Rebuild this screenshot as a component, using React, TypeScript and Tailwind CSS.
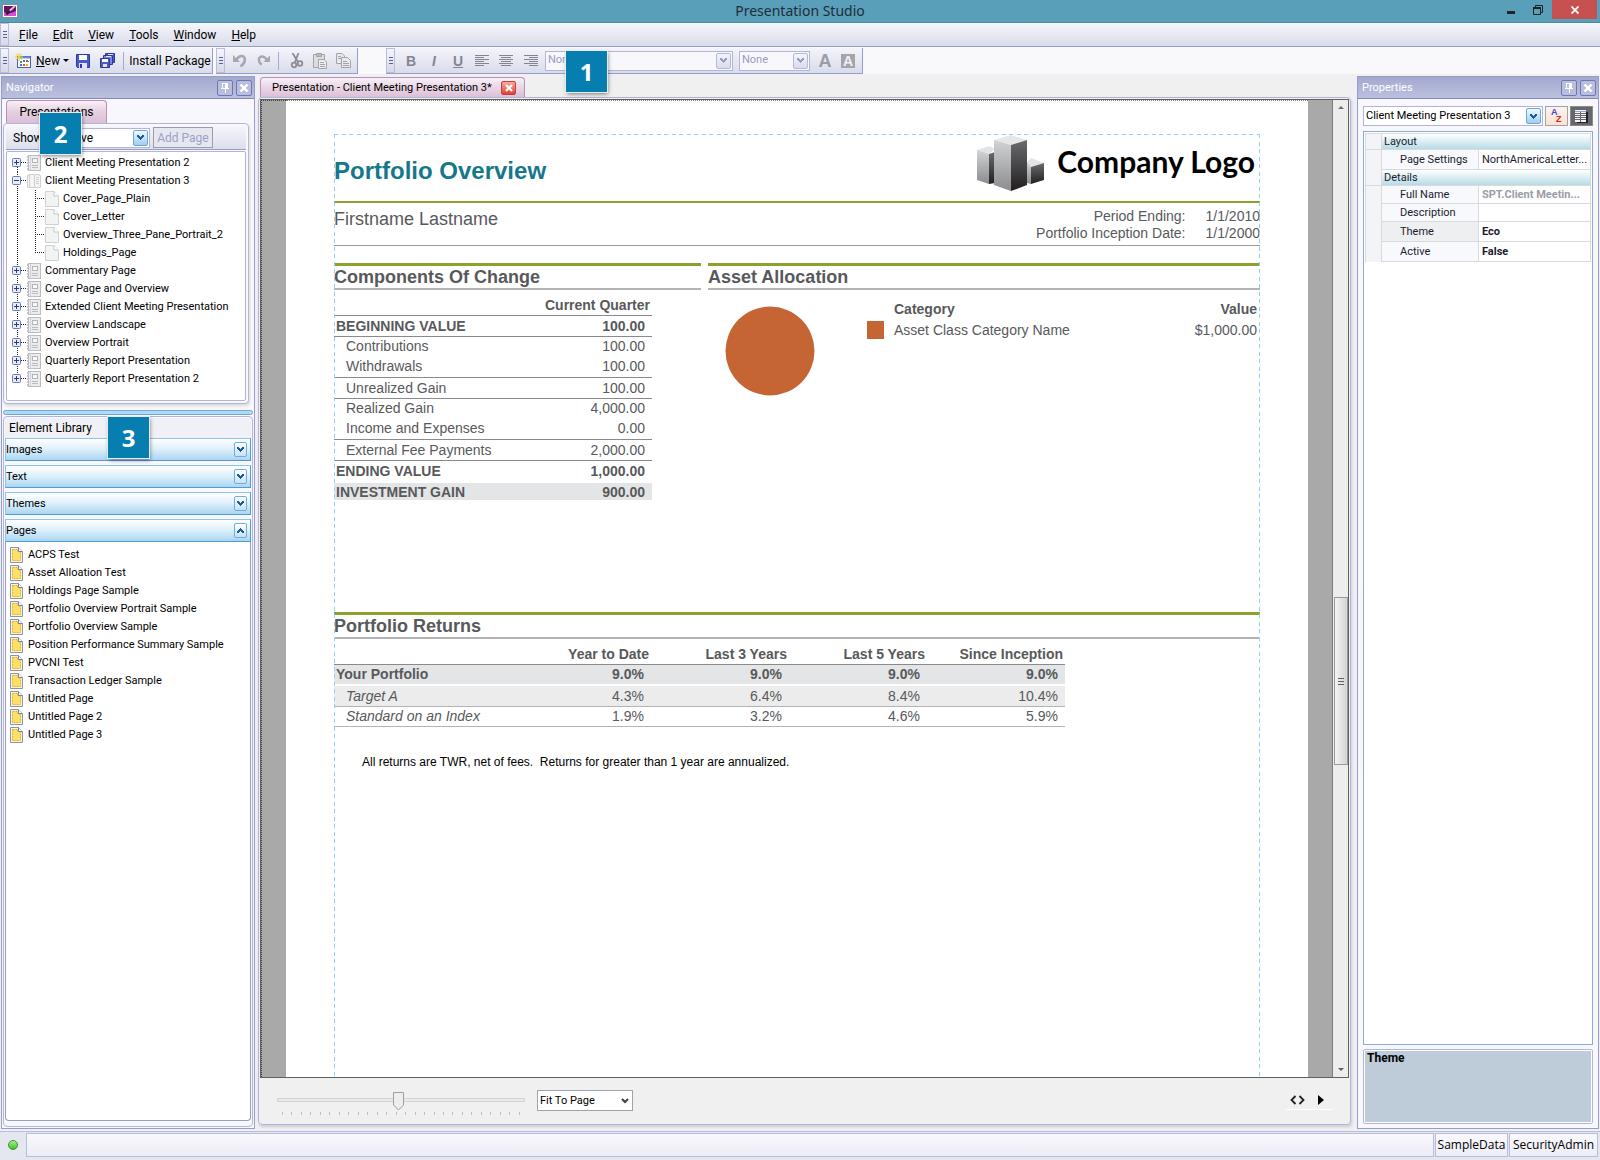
import React from 'react';

type TreeItem = { label: string; level: 0 | 1; open?: boolean; last?: boolean };

const MENUS = ['File', 'Edit', 'View', 'Tools', 'Window', 'Help'];

const TREE: TreeItem[] = [
  { label: 'Client Meeting Presentation 2', level: 0 },
  { label: 'Client Meeting Presentation 3', level: 0, open: true },
  { label: 'Cover_Page_Plain', level: 1 },
  { label: 'Cover_Letter', level: 1 },
  { label: 'Overview_Three_Pane_Portrait_2', level: 1 },
  { label: 'Holdings_Page', level: 1, last: true },
  { label: 'Commentary Page', level: 0 },
  { label: 'Cover Page and Overview', level: 0 },
  { label: 'Extended Client Meeting Presentation', level: 0 },
  { label: 'Overview Landscape', level: 0 },
  { label: 'Overview Portrait', level: 0 },
  { label: 'Quarterly Report Presentation', level: 0 },
  { label: 'Quarterly Report Presentation 2', level: 0, last: true },
];

const LIBRARY_PAGES = [
  'ACPS Test',
  'Asset Alloation Test',
  'Holdings Page Sample',
  'Portfolio Overview Portrait Sample',
  'Portfolio Overview Sample',
  'Position Performance Summary Sample',
  'PVCNI Test',
  'Transaction Ledger Sample',
  'Untitled Page',
  'Untitled Page 2',
  'Untitled Page 3',
];

const CHANGES = [
  { label: 'BEGINNING VALUE', value: '100.00', row: 'h-[21px] font-bold border-b border-[#8a8a8c]' },
  { label: 'Contributions', value: '100.00', row: 'h-5', indent: true },
  { label: 'Withdrawals', value: '100.00', row: 'h-[21px] border-b border-[#8a8a8c]', indent: true },
  { label: 'Unrealized Gain', value: '100.00', row: 'h-[21px] border-b border-[#8a8a8c]', indent: true },
  { label: 'Realized Gain', value: '4,000.00', row: 'h-5', indent: true },
  { label: 'Income and Expenses', value: '0.00', row: 'h-[21px] border-b border-[#8a8a8c]', indent: true },
  { label: 'External Fee Payments', value: '2,000.00', row: 'h-[21px] border-b border-[#8a8a8c]', indent: true },
  { label: 'ENDING VALUE', value: '1,000.00', row: 'h-[22px] font-bold border-b-2 border-white' },
  { label: 'INVESTMENT GAIN', value: '900.00', row: 'h-[18px] font-bold bg-[#e4e5e7]' },
];

const RETURNS = [
  { label: 'Your Portfolio', values: ['9.0%', '9.0%', '9.0%', '9.0%'], row: 'h-[21px] font-bold bg-[#e4e5e7] border-b-2 border-white', cell: 'pl-0.5' },
  { label: 'Target A', values: ['4.3%', '6.4%', '8.4%', '10.4%'], row: 'h-[21px] bg-[#ececec] border-b border-[#b4b4b6]', cell: 'pl-3 italic' },
  { label: 'Standard on an Index', values: ['1.9%', '3.2%', '4.6%', '5.9%'], row: 'h-5 border-b border-[#b4b4b6]', cell: 'pl-3 italic' },
];

const Chevron = ({ up = false, color = '#1c5a9c' }: { up?: boolean; color?: string }) => (
  <svg width="7" height="5" viewBox="0 0 7 5" shapeRendering="crispEdges" className={up ? 'rotate-180' : ''}>
    <path d="M0 0h2v1h1v1h1v-1h1v-1h2v2h-1v1h-1v1h-1v1h-1v-1h-1v-1h-1v-1h-1z" fill={color} />
  </svg>
);

const DropArrow = ({ disabled = false }: { disabled?: boolean }) => (
  <span
    className={`pointer-events-none absolute right-0.5 top-0.5 bottom-0.5 flex w-[15px] items-center justify-center rounded-xs border ${
      disabled
        ? 'border-[#b4b8da] bg-linear-to-b from-[#f4f5fa] to-[#d8dbea]'
        : 'border-[#6fa8d8] bg-linear-to-b from-[#f2f9fe] to-[#9fcdf0]'
    }`}
  >
    <Chevron color={disabled ? '#969bc8' : '#1c5a9c'} />
  </span>
);

const Grip = () => (
  <div className="flex w-[9px] shrink-0 flex-col items-center justify-center gap-px border border-[#b9bddb] bg-linear-to-b from-[#f5f5fb] to-[#d5d8e8]">
    <span className="h-px w-1 bg-[#5a609c]" />
    <span className="mt-px h-px w-1 bg-[#5a609c]" />
    <span className="mt-px h-px w-1 bg-[#5a609c]" />
  </div>
);

const Separator = () => <span className="h-[18px] w-px shrink-0 bg-[#a4aacc]" />;

const ToolGroup = ({ children, className }: { children: React.ReactNode; className: string }) => (
  <div className={`flex h-[26px] shrink-0 border-b border-r border-[#979dc9] ${className}`}>
    <Grip />
    <div className="flex flex-1 items-center bg-linear-to-b from-[#f4f4fa] to-[#d9dcea]">{children}</div>
  </div>
);

const PanelHeader = ({ title }: { title: string }) => (
  <div className="flex h-[22px] shrink-0 items-center border-b border-[#8288ba] bg-linear-to-b from-[#a3a9cd] via-[#b0b5d8] to-[#bcc0de] pl-1 pr-0.5">
    <h2 className="flex-1 text-[11px] text-white">{title}</h2>
    <div className="flex gap-[3px]">
      <button aria-label="Pin" className="flex h-4 w-4 items-center justify-center rounded-xs border border-[#6e77b4] bg-[#b9bedd]">
        <svg width="8" height="10" viewBox="0 0 8 10" shapeRendering="crispEdges">
          <path d="M1 0h6v5h1v1h-3v4h-1v-4h-4v-1h1zM2 1v4h2v-4z" fill="#fff" fillRule="evenodd" />
        </svg>
      </button>
      <button aria-label="Close" className="flex h-4 w-4 items-center justify-center rounded-xs border border-[#6e77b4] bg-[#b9bedd]">
        <svg width="10" height="10" viewBox="0 0 10 10">
          <path d="M1.5 1.5l7 7M8.5 1.5l-7 7" stroke="#fff" strokeWidth="2.4" />
        </svg>
      </button>
    </div>
  </div>
);

const Callout = ({ n, className }: { n: number; className: string }) => (
  <div
    className={`absolute z-10 flex h-[41px] w-[41px] items-center justify-center bg-[#067fb0] font-['Open_Sans',sans-serif] text-2xl font-bold text-white shadow-[0_0_0_1px_#e8eaf0,1px_2px_4px_rgba(0,0,0,0.5)] ${className}`}
  >
    {n}
  </div>
);

const TreeRow = ({ item }: { item: TreeItem }) => {
  if (item.level === 1) {
    return (
      <li className="flex h-[18px] items-center">
        <svg width="38" height="18" viewBox="0 0 38 18" className="shrink-0">
          <path d="M10.5 0V18" stroke="#222" strokeDasharray="1 1" />
          <path d={item.last ? 'M28.5 0V9' : 'M28.5 0V18'} stroke="#222" strokeDasharray="1 1" />
          <path d="M30 8.5H37" stroke="#222" strokeDasharray="1 1" />
        </svg>
        <svg width="14" height="16" viewBox="0 0 14 16" className="shrink-0">
          <path d="M.5 .5H9L13.5 5V15.5H.5z" fill="#f2f3f3" stroke="#d0d2d2" />
          <path d="M9 .5V5H13.5" fill="#fff" stroke="#c4c6c6" />
        </svg>
        <span className="ml-1 whitespace-nowrap">{item.label}</span>
      </li>
    );
  }
  const first = item.label === TREE[0].label;
  return (
    <li className="flex h-[18px] items-center">
      <svg width="20" height="18" viewBox="0 0 20 18" className="shrink-0">
        <path d={first ? 'M10.5 9V18' : item.last ? 'M10.5 0V9' : 'M10.5 0V18'} stroke="#222" strokeDasharray="1 1" />
        <path d="M14 8.5H20" stroke="#222" strokeDasharray="1 1" />
        <rect x="5.5" y="4.5" width="8" height="8" rx="1" fill="#e8ebf8" stroke="#6c78b4" />
        <path d="M7 8.5H12" stroke="#2c3880" />
        {!item.open && <path d="M9.5 6V11" stroke="#2c3880" />}
      </svg>
      {item.open ? (
        <svg width="14" height="16" viewBox="0 0 14 16" className="shrink-0">
          <path d="M.5 2.5H2V1.5H7L7.5 2.5L8 1.5H12V2.5H13.5V14.5H.5z" fill="#f4f4f4" stroke="#cfd0d2" />
          <path d="M2.5 2V14M7.5 2V14M9 4.5H12M9 6.5H12M9 8.5H12M9 10.5H12" stroke="#cfd0d2" fill="none" />
        </svg>
      ) : (
        <svg width="14" height="16" viewBox="0 0 14 16" className="shrink-0">
          <rect x="1.5" y=".5" width="12" height="15" fill="#ececee" stroke="#bcbdc2" />
          <path d="M.5 1V15" stroke="#c4c5c8" strokeDasharray="2 1" />
          <path d="M3.5 1V15" stroke="#d2d3d6" />
          <rect x="5.5" y="3.5" width="5" height="4" fill="#f8f8f8" stroke="#b4b5ba" />
          <path d="M5 10.5H11M5 12.5H11" stroke="#bcbdc2" />
        </svg>
      )}
      <span className="ml-1 whitespace-nowrap">{item.label}</span>
    </li>
  );
};

const LibrarySection = ({ title, open = false }: { title: string; open?: boolean }) => (
  <button
    aria-expanded={open}
    className="flex h-[23px] w-full shrink-0 items-center border border-t-[#8fc3ea] border-r-[#4f9bd2] border-b-[#4f9bd2] border-l-[#8fc3ea] bg-linear-to-b from-[#ffffff] via-[#dceffa] to-[#a9d6f3] pr-[3px] text-left"
  >
    <span className="flex-1">{title}</span>
    <span className="flex h-[15px] w-[13px] items-center justify-center rounded-xs border border-[#72aedc] bg-linear-to-b from-white to-[#c6e2f6]">
      <Chevron up={open} />
    </span>
  </button>
);

const Navigator = () => (
  <aside className="relative ml-px flex w-[254px] shrink-0 flex-col border border-[#979dc9] bg-[#f8f8fc] text-[11px]">
    <PanelHeader title="Navigator" />
    <div className="flex h-6 shrink-0 items-end pl-1">
      <button className="h-[23px] w-[101px] rounded-t-sm border border-b-0 border-[#b890b8] bg-linear-to-b from-[#f8f0f6] via-[#e4cfe0] to-[#dcc0d8] text-xs">
        Presentations
      </button>
    </div>
    <div className="mx-px flex h-[281px] w-[246px] shrink-0 flex-col rounded-sm border border-[#b2b5da] bg-[#f8f8fc] px-0.5 pt-0.5 pb-0.5 shadow-[1px_2px_3px_rgba(0,0,0,0.12)]">
      <div className="mb-px flex h-6 shrink-0 items-center border-b border-[#979dc9] bg-linear-to-b from-[#f5f5fa] to-[#dcdfec] pl-[7px] text-xs">
        <label htmlFor="show-filter" className="w-11">Show:</label>
        <span className="relative h-5 w-[93px]">
          <select id="show-filter" className="h-5 w-full appearance-none border border-[#b2b5da] bg-white pl-0.5 text-xs outline-none">
            <option>Active</option>
          </select>
          <DropArrow />
        </span>
        <button disabled className="ml-[3px] h-[21px] w-[60px] border border-[#9a9ca8] bg-[#e6e7ef] text-xs whitespace-nowrap text-[#9ba1c8]">
          Add Page
        </button>
      </div>
      <ul className="flex-1 rounded-xs border border-[#b2b5da] bg-white pt-0.5">
        {TREE.map((item) => (
          <TreeRow key={item.label} item={item} />
        ))}
      </ul>
    </div>
    <div className="mx-px mt-1.5 h-[5px] shrink-0 rounded-full border border-[#6ea9dc] bg-[#b4d8f4]" />
    <section className="mx-px mt-px mb-px flex min-h-0 flex-1 flex-col rounded-sm border border-[#b2b5da] p-px">
      <h3 className="flex h-5 shrink-0 items-center bg-[#f0f1f6] pl-1 text-xs">Element Library</h3>
      <div className="flex min-h-0 flex-1 flex-col gap-1 pb-1">
        <LibrarySection title="Images" />
        <LibrarySection title="Text" />
        <LibrarySection title="Themes" />
        <div className="flex min-h-0 flex-1 flex-col">
          <LibrarySection title="Pages" open />
          <ul className="flex-1 rounded-b-sm border border-t-0 border-[#979dc9] bg-white pt-1">
            {LIBRARY_PAGES.map((page) => (
              <li key={page} className="flex h-[18px] items-center pl-1">
                <svg width="13" height="16" viewBox="0 0 13 16" className="shrink-0">
                  <path d="M.5 .5H8.5L12.5 4.5V15.5H.5z" fill="#fdf4d0" stroke="#8495ac" />
                  <path d="M2.5 2.5H8V5H10.5V13.5H2.5z" fill="#ffe066" stroke="#e8a840" strokeDasharray="2 1" />
                  <path d="M8.5 .5V4.5H12.5" fill="#fff" stroke="#6f86a8" />
                </svg>
                <span className="ml-[5px] whitespace-nowrap">{page}</span>
              </li>
            ))}
          </ul>
        </div>
      </div>
    </section>
    <Callout n={2} className="top-9 left-[38px]" />
    <Callout n={3} className="top-[340px] left-[106px]" />
  </aside>
);

const AlignIcon = ({ d }: { d: string }) => (
  <svg width="14" height="12" viewBox="0 0 14 12">
    <path d={d} stroke="#83868f" />
  </svg>
);

const Toolbar = () => (
  <div className="relative flex h-[27px] shrink-0 items-start bg-[#f9f9fc] pt-px text-xs">
    <ToolGroup className="w-[213px]">
      <button className="ml-1.5 flex items-center">
        <svg width="17" height="16" viewBox="0 0 17 16">
          <rect x="2.5" y="3.5" width="13" height="11" fill="#fff" stroke="#4c62b4" />
          <path d="M3 4.5H15" stroke="#6f8fe0" strokeWidth="2" />
          <path d="M5 8h2v2H5zM12 8h2v1h-2z" fill="#38a038" />
          <path d="M8 7h2v2H8zM5 11h2v2H5z" fill="#3d6be0" />
          <path d="M11 7h2v2h-2zM8 11h2v2H8z" fill="#e05030" />
          <path d="M11 11h2v2h-2z" fill="#e8b020" />
          <path d="M4 0V8M0 4H8M1 1L7 7M7 1L1 7" stroke="#e8d428" />
        </svg>
        <span className="ml-1"><u>N</u>ew</span>
        <span className="ml-[3px] border-x-[3px] border-t-[3px] border-x-transparent border-t-black" />
      </button>
      <button aria-label="Save" className="ml-[7px]">
        <svg width="14" height="14" viewBox="0 0 14 14">
          <path d="M.5 .5H13.5V13.5H1.5L.5 12.5z" fill="#4a5ac8" stroke="#2d3a9c" />
          <rect x="3" y="1" width="8" height="5" fill="#fff" />
          <rect x="3" y="9" width="8" height="5" fill="#dfe3f4" />
          <rect x="4" y="10" width="2" height="4" fill="#2d3a9c" />
        </svg>
      </button>
      <button aria-label="Save All" className="ml-2.5">
        <svg width="15" height="15" viewBox="0 0 15 15">
          <path d="M5.5 .5H14.5V9.5H5.5z" fill="#4a5ac8" stroke="#2d3a9c" />
          <path d="M3.5 2.5H12.5V11.5H3.5z" fill="#7a88dc" stroke="#2d3a9c" />
          <path d="M.5 5.5H9.5V14.5H.5z" fill="#4a5ac8" stroke="#2d3a9c" />
          <rect x="2" y="6" width="6" height="3" fill="#fff" />
          <rect x="3" y="11" width="4" height="3" fill="#dfe3f4" />
          <path d="M8 1.5H13M6 3.5H11" stroke="#dfe3f4" />
        </svg>
      </button>
      <span className="ml-2 flex"><Separator /></span>
      <button className="ml-1 flex-1 whitespace-nowrap">Install Package</button>
    </ToolGroup>
    <ToolGroup className="ml-[3px] w-[142px]">
      <button aria-label="Undo" className="ml-2">
        <svg width="14" height="14" viewBox="0 0 14 14">
          <path d="M0 1V8H7L4.5 5.5z" fill="#a6a8ae" />
          <path d="M3.5 5.5C6 1.5 10 1 11.3 3.5C12.5 6.5 11 10 7.5 12.5" stroke="#a6a8ae" strokeWidth="2.6" fill="none" />
        </svg>
      </button>
      <button aria-label="Redo" className="ml-2.5">
        <svg width="13" height="14" viewBox="0 0 14 14">
          <path d="M14 1V8H7L9.5 5.5z" fill="#a6a8ae" />
          <path d="M10.5 5.5C8 1.5 4 1 2.3 4C1.5 6.5 2.5 9 5 11" stroke="#a6a8ae" strokeWidth="2.6" fill="none" />
        </svg>
      </button>
      <span className="ml-2 flex"><Separator /></span>
      <button aria-label="Cut" className="ml-[11px]">
        <svg width="14" height="16" viewBox="0 0 14 16" fill="none" stroke="#8b8d93">
          <path d="M2.5 0L8 9M8.5 0L5 9" strokeWidth="1.8" />
          <circle cx="4" cy="12" r="2.3" strokeWidth="1.8" />
          <circle cx="10" cy="10.5" r="2.3" strokeWidth="1.8" />
        </svg>
      </button>
      <button aria-label="Paste" className="ml-[9px]">
        <svg width="14" height="16" viewBox="0 0 14 16" fill="#dcdde2" stroke="#a2a4aa">
          <path d="M.5 1.5H11.5V14.5H.5z" />
          <path d="M3.5 .5H8.5V3.5H3.5z" fill="#b8babf" />
          <path d="M5.5 6.5H11L13.5 9V15.5H5.5z" fill="#eeeef2" />
          <path d="M7 9.5H11M7 11.5H12M7 13.5H12" />
        </svg>
      </button>
      <button aria-label="Copy" className="ml-[9px]">
        <svg width="15" height="15" viewBox="0 0 15 15" fill="#e8e9ee" stroke="#a2a4aa">
          <path d="M.5 .5H6L8.5 3V10.5H.5z" />
          <path d="M5.5 4.5H11.5L14.5 7.5V14.5H5.5z" />
          <path d="M7 8.5H11M7 10.5H13M7 12.5H13M2 3.5H5M2 5.5H5" />
        </svg>
      </button>
    </ToolGroup>
    <ToolGroup className="ml-7 w-[477px]">
      <button aria-label="Bold" className="ml-2.5 w-3 font-['Liberation_Sans',sans-serif] text-sm font-bold text-[#83868f]">B</button>
      <button aria-label="Italic" className="ml-[11px] w-3 font-['Liberation_Sans',sans-serif] text-sm font-bold text-[#83868f] italic">I</button>
      <button aria-label="Underline" className="ml-3 w-3 font-['Liberation_Sans',sans-serif] text-sm font-bold text-[#83868f] underline">U</button>
      <button aria-label="Align left" className="ml-[11px]"><AlignIcon d="M0 .5H14M0 2.5H9M0 4.5H14M0 6.5H9M0 8.5H14M0 10.5H9" /></button>
      <button aria-label="Align center" className="ml-2.5"><AlignIcon d="M0 .5H14M2 2.5H12M0 4.5H14M2 6.5H12M0 8.5H14M2 10.5H12" /></button>
      <button aria-label="Align right" className="ml-[11px]"><AlignIcon d="M0 .5H14M5 2.5H14M0 4.5H14M5 6.5H14M0 8.5H14M5 10.5H14" /></button>
      <span className="relative ml-[7px] h-5 w-[188px]">
        <select aria-label="Font" disabled className="h-5 w-full appearance-none border border-[#b2b5da] bg-[#f8f8fc] pl-0.5 text-[11px] text-[#969bc8] opacity-100">
          <option>None</option>
        </select>
        <DropArrow disabled />
      </span>
      <span className="relative ml-1.5 h-5 w-[71px]">
        <select aria-label="Font size" disabled className="h-5 w-full appearance-none border border-[#b2b5da] bg-[#f8f8fc] pl-0.5 text-[11px] text-[#969bc8] opacity-100">
          <option>None</option>
        </select>
        <DropArrow disabled />
      </span>
      <button aria-label="Text color" className="ml-2 w-3.5 font-['Liberation_Sans',sans-serif] text-lg leading-4 font-bold text-[#9b9da4]">A</button>
      <button aria-label="Highlight color" className="ml-[9px] h-3.5 w-3.5 bg-[#a3a5ab] font-['Liberation_Sans',sans-serif] text-sm leading-3.5 font-bold text-[#f0f0f4]">A</button>
    </ToolGroup>
    <Callout n={1} className="top-1 left-[566px]" />
  </div>
);

const Buildings = () => (
  <svg width="68" height="57" viewBox="0 0 68 57">
    <defs>
      <linearGradient id="face-light" x1="0" y1="0" x2="0" y2="1">
        <stop offset="0" stopColor="#d2d3d5" />
        <stop offset="1" stopColor="#8b8c8f" />
      </linearGradient>
      <linearGradient id="face-dark" x1="0" y1="0" x2="0" y2="1">
        <stop offset="0" stopColor="#6a6b6e" />
        <stop offset="1" stopColor="#231f20" />
      </linearGradient>
    </defs>
    <path d="M0 15L12 11L18 14L12 19z" fill="#e2e3e4" />
    <path d="M0 15L12 19V49L0 45z" fill="url(#face-light)" />
    <path d="M12 19L18 17V48L12 49z" fill="url(#face-dark)" />
    <path d="M50 27L54 23L67 28L54 32z" fill="#e2e3e4" />
    <path d="M50 27L54 32V49L50 48z" fill="url(#face-light)" />
    <path d="M54 32L67 28V45L54 49z" fill="url(#face-dark)" />
    <path d="M17 5L34 0L50 5L34 10z" fill="#e6e7e8" />
    <path d="M17 5L34 10V56L17 50z" fill="url(#face-light)" />
    <path d="M34 10L50 5V50L34 56z" fill="url(#face-dark)" />
  </svg>
);

const SectionTitle = ({ children }: { children: React.ReactNode }) => (
  <h3 className="flex h-[27px] items-center border-t-[3px] border-b-2 border-t-[#8aa32c] border-b-[#b4b4b6] text-lg leading-5 font-bold">
    {children}
  </h3>
);

const Report = () => (
  <div className="relative h-full font-['Liberation_Sans',Arial,sans-serif] text-sm leading-4 text-[#58595b]">
    <div className="pointer-events-none absolute inset-0 bg-[repeating-linear-gradient(90deg,#8fd1fb_0_4px,transparent_4px_8px,#8fd1fb_8px_12px,transparent_12px_15px),repeating-linear-gradient(180deg,#8fd1fb_0_4px,transparent_4px_8px,#8fd1fb_8px_12px,transparent_12px_15px),repeating-linear-gradient(180deg,#8fd1fb_0_4px,transparent_4px_8px,#8fd1fb_8px_12px,transparent_12px_15px)] bg-[size:100%_1px,1px_100%,1px_100%] bg-[position:0_0,0_0,100%_0] bg-no-repeat" />
    <header className="flex h-[69px] items-start justify-between border-b-2 border-[#8aa32c]">
      <h1 className="mt-[25px] text-2xl leading-6 font-bold text-[#15788a]">Portfolio Overview</h1>
      <div className="mt-px mr-[5px] flex">
        <Buildings />
        <span className="mt-2.5 ml-3 font-[Lato,sans-serif] text-[30px] leading-8 font-bold whitespace-nowrap text-black">Company Logo</span>
      </div>
    </header>
    <div className="flex h-[43px] justify-between border-b border-[#9c9c9e]">
      <p className="mt-1.5 text-lg leading-5">Firstname Lastname</p>
      <dl className="mt-[5px] grid grid-cols-[auto_auto] gap-x-5 self-start text-right leading-[17px]">
        <dt>Period Ending:</dt>
        <dd>1/1/2010</dd>
        <dt>Portfolio Inception Date:</dt>
        <dd>1/1/2000</dd>
      </dl>
    </div>
    <div className="mt-[17px] flex h-[349px] gap-[7px]">
      <section className="w-[367px] shrink-0">
        <SectionTitle>Components Of Change</SectionTitle>
        <table className="mt-[5px] w-[318px] border-collapse">
          <thead>
            <tr className="h-5 border-b border-[#8a8a8c]">
              <th></th>
              <th className="p-0 pr-0.5 text-right">Current Quarter</th>
            </tr>
          </thead>
          <tbody>
            {CHANGES.map((c) => (
              <tr key={c.label} className={c.row}>
                <td className={c.indent ? 'p-0 pl-3' : 'p-0 pl-0.5'}>{c.label}</td>
                <td className="p-0 pr-[7px] text-right">{c.value}</td>
              </tr>
            ))}
          </tbody>
        </table>
      </section>
      <section className="flex-1">
        <SectionTitle>Asset Allocation</SectionTitle>
        <div className="flex">
          <svg width="90" height="90" viewBox="0 0 90 90" className="mt-4 ml-[17px] shrink-0">
            <circle cx="45" cy="45" r="44.5" fill="#c56534" />
          </svg>
          <table className="mt-2 ml-[52px] flex-1 border-collapse self-start">
            <thead>
              <tr className="h-[21px]">
                <th className="w-[27px] p-0"></th>
                <th className="p-0 text-left">Category</th>
                <th className="p-0 pr-[3px] text-right">Value</th>
              </tr>
            </thead>
            <tbody>
              <tr className="h-[21px]">
                <td className="p-0"><span className="block h-[18px] w-[17px] bg-[#c56534]" /></td>
                <td className="p-0">Asset Class Category Name</td>
                <td className="p-0 pr-[3px] text-right">$1,000.00</td>
              </tr>
            </tbody>
          </table>
        </div>
      </section>
    </div>
    <section>
      <SectionTitle>Portfolio Returns</SectionTitle>
      <table className="mt-[5px] w-[731px] table-fixed border-collapse">
        <thead>
          <tr className="h-5 border-b border-[#8a8a8c]">
            <th className="w-[179px] p-0"></th>
            <th className="p-0 pr-0.5 text-right">Year to Date</th>
            <th className="p-0 pr-0.5 text-right">Last 3 Years</th>
            <th className="p-0 pr-0.5 text-right">Last 5 Years</th>
            <th className="p-0 pr-0.5 text-right">Since Inception</th>
          </tr>
        </thead>
        <tbody>
          {RETURNS.map((r) => (
            <tr key={r.label} className={r.row}>
              <td className={`p-0 ${r.cell}`}>{r.label}</td>
              {r.values.map((v, i) => (
                <td key={i} className="p-0 pr-[7px] text-right">{v}</td>
              ))}
            </tr>
          ))}
        </tbody>
      </table>
      <p className="mt-[27px] ml-7 text-xs whitespace-pre text-black">{'All returns are TWR, net of fees.  Returns for greater than 1 year are annualized.'}</p>
    </section>
  </div>
);

const ZoomSlider = () => (
  <div className="relative w-[248px]">
    <input
      type="range"
      aria-label="Zoom"
      min={0}
      max={25}
      defaultValue={12}
      className="block h-5 w-full appearance-none bg-transparent [&::-webkit-slider-runnable-track]:h-1 [&::-webkit-slider-runnable-track]:border [&::-webkit-slider-runnable-track]:border-[#d2d5d5] [&::-webkit-slider-runnable-track]:bg-[#e7eaea] [&::-webkit-slider-thumb]:h-1 [&::-webkit-slider-thumb]:w-[11px] [&::-webkit-slider-thumb]:appearance-none"
    />
    <svg width="11" height="19" viewBox="0 0 11 19" className="pointer-events-none absolute top-0.5 left-[116px]">
      <path d="M.5 .5H10.5V13L5.5 18L.5 13z" fill="#eeeeee" stroke="#9c9ea0" />
    </svg>
    <div className="mt-0.5 flex justify-between px-[5px]">
      {Array.from({ length: 26 }, (_, i) => (
        <span key={i} className="h-[3px] w-px bg-[#c0c0c0]" />
      ))}
    </div>
  </div>
);

const Document = () => (
  <main className="ml-[3px] flex min-w-0 flex-1 flex-col bg-[#f0f0f0] pb-1">
    <div className="flex h-[21px] shrink-0 items-end pl-0.5">
      <div className="flex h-5 w-[265px] items-center rounded-t-sm border border-b-0 border-[#b890b8] bg-linear-to-b from-[#f8f0f6] via-[#e9d6e5] to-[#dcc0d8] pl-[11px] text-[11px]">
        <span className="whitespace-nowrap">Presentation - Client Meeting Presentation 3*</span>
        <button aria-label="Close tab" className="ml-auto mr-2 flex h-3.5 w-[15px] items-center justify-center rounded-xs border border-[#c83c3c] bg-linear-to-b from-[#f4a8a0] to-[#e0402c]">
          <svg width="8" height="8" viewBox="0 0 8 8">
            <path d="M1 1l6 6M7 1l-6 6" stroke="#fff" strokeWidth="2" />
          </svg>
        </button>
      </div>
    </div>
    <div className="flex min-h-0 flex-1 flex-col rounded-sm border border-[#b2b5da] p-px shadow-[1px_2px_3px_rgba(0,0,0,0.15)]">
      <div className="flex min-h-0 flex-1 border border-[#606060]">
        <div className="w-[25px] shrink-0 border-t border-l border-dotted border-[#404040] bg-[#a9a9a9]" />
        <div className="min-w-0 flex-1 overflow-hidden border-t border-dotted border-[#808080] bg-white px-12 pt-[33px]">
          <Report />
        </div>
        <div className="w-[25px] shrink-0 border-r border-[#7c7c7c] bg-[#a9a9a9]" />
        <div className="flex w-[15px] shrink-0 flex-col items-center bg-[#ededed] py-1.5">
          <span className="border-x-[3px] border-b-[3px] border-x-transparent border-b-[#707070]" />
          <div className="mt-[488px] flex h-[168px] w-3.5 shrink-0 flex-col items-center justify-center gap-px border border-[#9a9a9a] bg-linear-to-r from-[#f4f4f4] to-[#d4d4d8]">
            <span className="h-px w-1.5 bg-[#606060]" />
            <span className="mt-px h-px w-1.5 bg-[#606060]" />
            <span className="mt-px h-px w-1.5 bg-[#606060]" />
          </div>
          <span className="mt-auto border-x-[3px] border-t-[3px] border-x-transparent border-t-[#606060]" />
        </div>
      </div>
      <div className="flex h-[45px] shrink-0 items-start pt-3 pl-[17px]">
        <ZoomSlider />
        <span className="relative ml-3 h-[21px] w-24">
          <select aria-label="Page zoom" className="h-[21px] w-full appearance-none border border-[#a0a2ac] bg-white pl-0.5 text-[11px] outline-none">
            <option>Fit To Page</option>
          </select>
          <svg width="8" height="6" viewBox="0 0 8 6" className="pointer-events-none absolute top-2 right-1">
            <path d="M1 1L4 4L7 1" stroke="#404040" strokeWidth="2" fill="none" />
          </svg>
        </span>
        <div className="mr-4 ml-auto flex h-5 items-center border-b border-white">
          <button aria-label="View code" className="w-[23px]">
            <svg width="15" height="10" viewBox="0 0 15 10" className="mx-auto">
              <path d="M5.5 1L1.5 5L5.5 9M9.5 1L13.5 5L9.5 9" stroke="#222" strokeWidth="1.8" fill="none" />
            </svg>
          </button>
          <button aria-label="Preview" className="flex w-6 justify-center">
            <span className="border-y-[5px] border-l-[6px] border-y-transparent border-l-black" />
          </button>
        </div>
      </div>
    </div>
  </main>
);

const Category = ({ label }: { label: string }) => (
  <tr className="h-4">
    <td className="border-r border-b border-[#d8dadc] bg-[#f2f4f5] p-0"></td>
    <th colSpan={2} className="border-b border-[#d8dadc] bg-linear-to-b from-white to-[#b6dce6] p-0 pl-0.5 text-left font-normal">{label}</th>
  </tr>
);

const Property = ({ name, value, row, cell = '' }: { name: string; value: string; row: string; cell?: string }) => (
  <tr className={row}>
    <td className="border-r border-[#d8dadc] bg-[#f2f4f5] p-0"></td>
    <th className={`border-r border-b border-[#d8dadc] p-0 pl-[18px] text-left font-normal ${name === 'Theme' ? 'bg-[#eeeff1]' : 'bg-[#f8f9fc]'}`}>{name}</th>
    <td className={`border-b border-[#d8dadc] p-0 pl-[3px] whitespace-nowrap ${cell}`}>{value}</td>
  </tr>
);

const Properties = () => (
  <aside className="mr-px ml-1.5 flex w-[242px] shrink-0 flex-col border border-[#979dc9] bg-[#f8f8fc] text-[11px]">
    <PanelHeader title="Properties" />
    <div className="flex shrink-0 items-center px-[5px] pt-[7px]">
      <span className="relative h-5 flex-1">
        <select aria-label="Selected object" className="h-5 w-full appearance-none border border-[#b2b5da] bg-white pl-0.5 text-[11px] outline-none">
          <option>Client Meeting Presentation 3</option>
        </select>
        <DropArrow />
      </span>
      <button aria-label="Sort alphabetically" className="relative ml-0.5 h-5 w-[23px] border border-[#a0a2ac] bg-linear-to-b from-[#fdf3ec] to-[#fbe2cf] font-['Liberation_Sans',sans-serif] text-[9px] leading-none font-bold">
        <span className="absolute top-px left-[5px] text-[#3a48c8]">A</span>
        <span className="absolute top-2 left-[10px] text-[#e02020]">Z</span>
      </button>
      <button aria-label="Categorized" className="ml-0.5 flex h-5 w-[23px] items-center justify-center border border-[#8a8a8e] bg-[#66676b]">
        <svg width="13" height="13" viewBox="0 0 13 13">
          <path d="M2 2H13V13H2z" fill="#222" />
          <path d="M0 0H11V12H0z" fill="#f4f4f8" />
          <path d="M0 1.5H11" stroke="#8fa4d0" />
          <path d="M0 3.5H11M0 5.5H11M0 7.5H11M0 9.5H11M5.5 2V12" stroke="#66676b" />
        </svg>
      </button>
    </div>
    <div className="mx-[5px] mt-[5px] min-h-0 flex-1 border border-[#8aabdb] bg-white p-px leading-[14px] text-[#1b1b30]">
      <table className="w-full table-fixed border-separate border-spacing-0 border border-b-0 border-[#d8dadc]">
        <colgroup>
          <col className="w-4" />
          <col className="w-[97px]" />
          <col />
        </colgroup>
        <tbody>
          <Category label="Layout" />
          <Property name="Page Settings" value="NorthAmericaLetter..." row="h-5" />
          <Category label="Details" />
          <Property name="Full Name" value="SPT.Client Meetin..." row="h-[18px]" cell="font-bold text-[#9a9ca6]" />
          <Property name="Description" value="" row="h-[18px]" />
          <Property name="Theme" value="Eco" row="h-5" cell="font-bold" />
          <Property name="Active" value="False" row="h-5" cell="font-bold" />
        </tbody>
      </table>
    </div>
    <div className="mx-[5px] mt-1 mb-1 h-[75px] shrink-0 rounded-xs border border-[#b2b5da] bg-white p-px">
      <div className="h-full bg-[#becbd8] pl-0.5 text-xs leading-[14px] font-bold">Theme</div>
    </div>
  </aside>
);

const App: React.FC = () => (
  <div className="flex h-screen min-w-[1200px] flex-col overflow-hidden bg-[#f0f0f4] font-[Roboto,sans-serif] leading-4 text-black">
    <header className="relative flex h-[23px] shrink-0 items-center border-b border-[#4a8aa4] bg-[#5a9fba]">
      <svg width="16" height="14" viewBox="0 0 16 14" className="ml-0.5">
        <rect x=".5" y=".5" width="15" height="13" fill="#fff" stroke="#8c88a0" />
        <rect x="2" y="2" width="12" height="10" fill="#5c1468" />
        <path d="M2 12V8L9 9L14 7V12z" fill="#e048d8" />
        <path d="M4 10L13 2" stroke="#d8c0c8" strokeWidth="2" />
        <path d="M4 10L8 7" stroke="#3a1c28" strokeWidth="3" />
      </svg>
      <h1 className="absolute inset-x-0 text-center font-['Noto_Sans',sans-serif] text-sm text-[#1f2d38]">Presentation Studio</h1>
      <div className="relative ml-auto mr-[3px] flex h-full items-start">
        <button aria-label="Minimize" className="flex h-[19px] w-[26px] items-center justify-center">
          <span className="mt-1.5 h-[3px] w-2 bg-[#222]" />
        </button>
        <button aria-label="Restore" className="flex h-[19px] w-7 items-center justify-center">
          <svg width="10" height="10" viewBox="0 0 10 10" fill="none" stroke="#222">
            <path d="M2.5 2V.5H9.5V7.5H8" />
            <path d="M.5 3H7.5V9.5H.5z" />
            <path d="M0 3H8" strokeWidth="2" />
          </svg>
        </button>
        <button aria-label="Close" className="flex h-[19px] w-[45px] items-center justify-center bg-[#c75050]">
          <svg width="8" height="8" viewBox="0 0 8 8">
            <path d="M.5 .5l7 7M7.5 .5l-7 7" stroke="#fff" strokeWidth="1.8" />
          </svg>
        </button>
      </div>
    </header>
    <nav className="flex h-6 shrink-0 border-b border-[#979dc9] bg-linear-to-b from-[#f6f6fb] to-[#d9dcea]">
      <Grip />
      <div className="flex items-center gap-[15px] pl-2.5 text-xs">
        {MENUS.map((menu) => (
          <button key={menu}>
            <u>{menu[0]}</u>
            {menu.slice(1)}
          </button>
        ))}
      </div>
    </nav>
    <Toolbar />
    <div className="flex min-h-0 flex-1 pt-0.5">
      <Navigator />
      <Document />
      <Properties />
    </div>
    <footer className="mt-0.5 flex h-[29px] shrink-0 border-t border-[#b9bddb] bg-[#e4e6f0] pt-px pb-[3px] font-['Open_Sans',sans-serif] text-xs">
      <div className="flex w-[26px] items-center justify-center">
        <span className="h-2.5 w-2.5 rounded-full border border-[#2f9a2f] bg-linear-to-b from-[#a8ec90] to-[#38c018]" />
      </div>
      <div className="flex-1 border border-[#b9bddb] bg-linear-to-b from-[#f8f8fc] to-[#ecedf5]" />
      <div className="ml-px flex w-[73px] items-center justify-center border border-[#b9bddb] bg-linear-to-b from-[#f8f8fc] to-[#ecedf5]">SampleData</div>
      <div className="mr-0.5 ml-px flex w-[89px] items-center justify-center border border-[#b9bddb] bg-linear-to-b from-[#f8f8fc] to-[#ecedf5]">SecurityAdmin</div>
    </footer>
  </div>
);

export default App;
